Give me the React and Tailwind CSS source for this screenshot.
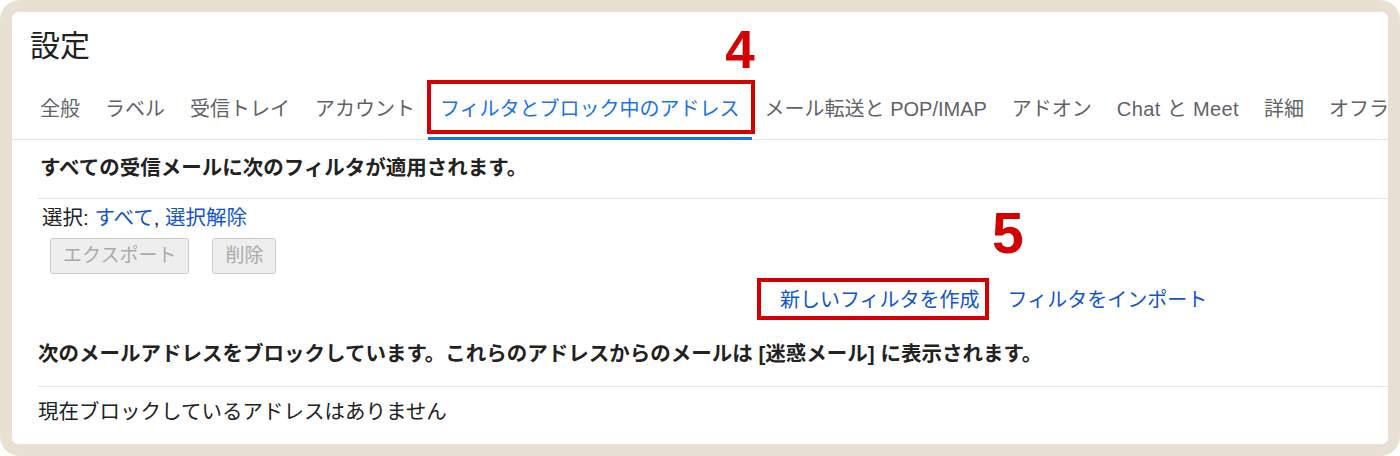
import React from "react";

const tabs = [
  "全般",
  "ラベル",
  "受信トレイ",
  "アカウント",
  "フィルタとブロック中のアドレス",
  "メール転送と POP/IMAP",
  "アドオン",
  "Chat と Meet",
  "詳細",
  "オフライン",
  "テーマ",
];

const font = {
  fontFamily: '"Liberation Sans", "Noto Sans CJK JP", "Noto Sans", sans-serif',
};
const markFont = { fontFamily: '"Liberation Sans", Arial, sans-serif' };

const App = () => {
  return (
    <div className="w-[1400px] h-[456px] bg-white">
      <div className="h-full bg-[#e9e0d4] rounded-[20px] p-3">
        <div
          className="h-full bg-white rounded-[6px] overflow-hidden text-[#222]"
          style={font}
        >
          {/* Title */}
          <div className="pt-4 pl-[18px] text-[30px] leading-[36px] text-[#202124]">
            設定
          </div>

          {/* Tabs */}
          <div className="flex flex-nowrap pt-[15px] pl-4 border-b border-[#e3e3e3] whitespace-nowrap">
            {tabs.map((tab, i) => {
              const active = i === 4;
              return (
                <div
                  key={tab}
                  className={`relative shrink-0 h-[60px] flex items-center px-3 mr-px text-[20px] ${
                    active ? "text-[#1a73e8]" : "text-[#5f6368]"
                  } ${tab === "Chat と Meet" ? "tracking-[0.4px]" : ""}`}
                >
                  {tab}
                  {active && (
                    <>
                      <span className="absolute left-0 right-0 -bottom-px h-[3px] bg-[#1a73e8]" />
                      <span className="absolute -left-px -right-[3px] top-px bottom-[5px] border-4 border-[#d40000]" />
                      <span
                        className="absolute right-[-3px] -top-[56px] text-[53px] leading-none font-bold text-[#d40000]"
                        style={markFont}
                      >
                        4
                      </span>
                    </>
                  )}
                </div>
              );
            })}
          </div>

          {/* Filters */}
          <div className="pl-[26px]">
            <div className="pt-[14px] pb-4 pl-0.5 text-[20.5px] leading-[28px] font-bold border-b border-[#e3e3e3]">
              すべての受信メールに次のフィルタが適用されます。
            </div>
            <div className="pt-[5px] pl-1 text-[20.5px] leading-[28px]">
              選択: <span className="text-[#1155cc]">すべて</span>,{" "}
              <span className="text-[#1155cc]">選択解除</span>
            </div>
            <div className="flex gap-[23px] mt-1.5 pl-3">
              <button className="h-9 px-3 text-[19px] text-[#aaa] bg-[#eeeeee] border border-[#cccccc] rounded-[3px]">
                エクスポート
              </button>
              <button className="h-9 px-3 text-[19px] text-[#aaa] bg-[#eeeeee] border border-[#cccccc] rounded-[3px]">
                削除
              </button>
            </div>
            <div className="flex gap-7 mt-3 pl-[742px] text-[20px] leading-[28px] text-[#1155cc]">
              <span className="relative">
                新しいフィルタを作成
                <span className="absolute -left-[23px] -right-[9px] -top-2 -bottom-[6px] border-4 border-[#d40000]" />
                <span
                  className="absolute -right-[44px] -top-[81px] text-[57px] leading-none font-bold text-[#d40000]"
                  style={markFont}
                >
                  5
                </span>
              </span>
              <span>フィルタをインポート</span>
            </div>

            {/* Blocked */}
            <div className="pt-[26px] pb-[18px] text-[20.5px] leading-[28px] font-bold border-b border-[#e3e3e3]">
              次のメールアドレスをブロックしています。これらのアドレスからのメールは [迷惑メール] に表示されます。
            </div>
            <div className="pt-[11px] text-[20.5px] leading-[28px]">
              現在ブロックしているアドレスはありません
            </div>
          </div>
        </div>
      </div>
    </div>
  );
};

export default App;
